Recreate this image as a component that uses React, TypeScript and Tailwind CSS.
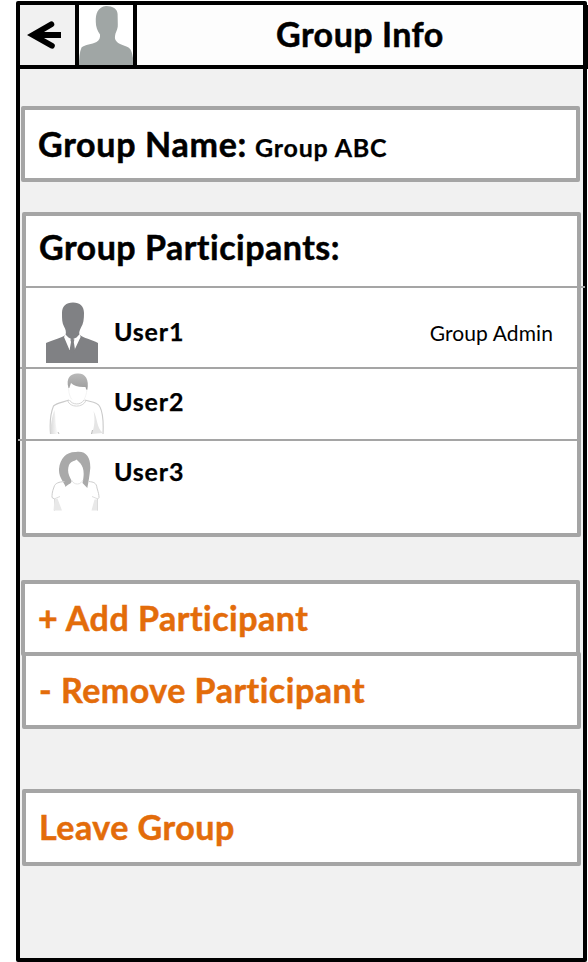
import type { ReactNode } from "react";

const heading = "text-[34px] leading-[40px] font-bold tracking-[0.5px] whitespace-pre [-webkit-text-stroke:0.5px_currentColor]";
const userName = "text-[25px] leading-[30px] font-bold tracking-[0.8px] whitespace-pre [-webkit-text-stroke:0.25px_currentColor]";

function BackArrow() {
  return (
    <svg className="h-[60px] w-[55px]" viewBox="20 5 55 60">
      <path d="M27 35 L50.500 21.600 A2.900 2.900 0 0 1 53.300 26.600 L44 32 H61 V38 H44 L53.300 43.200 A2.900 2.900 0 0 1 50.500 48.300 Z" fill="#000" />
    </svg>
  );
}

function GroupAvatar() {
  return (
    <svg className="h-[60px] w-[54px]" viewBox="79 5 54 60">
      <path d="M106 6 C112 5.800 117.500 8.500 117.600 14 L117.800 24 C118.200 28 116.500 31 115.500 33.500 C115 36 114.500 38 115.500 40 C117.500 44 123 45 128.500 47.500 C131.800 49.500 132.500 55 133 58 V65 H79 C79 59 79.500 52 81.500 47.500 C85 44.500 92 44.500 96.500 42 C99.500 40 100.300 37.500 100 34.500 C97.500 31 95.800 27 95.800 22 C95.500 13 98 7 106 6 Z" fill="#a0a6a5" />
    </svg>
  );
}

function AdminAvatar() {
  return (
    <svg className="h-[61px] w-[53px]" viewBox="46 302 53 61">
      <path d="M73 302.500 C80 302.500 84 306.500 84 313 C84 319 83.500 324 81 327.500 C79.500 331 78.500 333 80 335 C83 338 92 339.500 98 343 V363 H46 V343 C52 340 62 338 65.500 335 C66.500 332 65.500 329 64 326.500 C62 323 62 319 62 313 C62 306.500 66 302.500 73 302.500 Z" fill="#808184" />
      <path d="M65.500 334.500 L68.500 337.500 L72 339.500 L76.500 337.500 L79.800 334 L80.600 337 L74.500 350 L69.500 350 L64 337 Z" fill="#fff" />
      <path d="M70.300 339.500 L72.300 338.800 L74.400 339.500 L73.800 342 L75 349.500 L72.500 353 L69.700 349.500 L71 342 Z" fill="#808184" />
    </svg>
  );
}

function ManAvatar() {
  return (
    <svg className="h-[63px] w-[56px]" viewBox="49 372 56 63">
      <defs>
        <linearGradient id="man-hair" x1="0" y1="0" x2="0" y2="1">
          <stop offset="0" stopColor="#b9b9b9" />
          <stop offset="1" stopColor="#9c9c9c" />
        </linearGradient>
        <linearGradient id="man-sleeve" x1="0" y1="0" x2="1" y2="0">
          <stop offset="0" stopColor="#d9d9d9" />
          <stop offset="1" stopColor="#fff" />
        </linearGradient>
      </defs>
      <path d="M68.500 388 C65.500 378 71 373.300 77.500 373.500 C85 373 89.500 379 87.300 390 L86.300 390 L85.500 387 C79 387.500 74 386 71 383 L69.300 388 Z" fill="url(#man-hair)" />
      <path d="M68.500 388 C68.800 394 70.500 398 72 399.500 M87 389 C86.500 394 85.500 397 84 399.500" fill="none" stroke="#f0f0f0" strokeWidth=".8" />
      <path d="M50.500 434 C49.500 422 51 412 53.500 406 C57 402.500 65 402 69 400 M84.500 400 C91 402 98 402 100 407 C103.500 414 103.500 424 103 434" fill="none" stroke="#cacaca" strokeWidth="1.100" />
      <path d="M67.500 400.500 C70 408 83 408 86 400.500 M69.500 400 C72 405 81 405.500 84 400" fill="none" stroke="#d0d0d0" strokeWidth=".9" />
      <path d="M50.500 434 C50.500 426 52 416 54.500 410 C56 418 54.500 424 58 434 Z" fill="url(#man-sleeve)" />
      <path d="M91.500 434 C95 427 95 418 93.500 411 C98 419 96 427 103 433 Z" fill="#e5e5e5" />
      <path d="M58 432 l1 2 M92.500 430 l-1 4" stroke="#bbb" />
    </svg>
  );
}

function WomanAvatar() {
  return (
    <svg className="h-[61px] w-[50px]" viewBox="50 451 50 61">
      <path d="M65.500 487 C65 483 58.500 478 59 469 C60 458 67 451.500 76 452 C86 450.500 90.500 457 90.300 468 C89.500 476 88.500 482 87.300 488 L82.500 483 C84.500 474 84 468 80.500 463.500 L76.500 459.500 C74 461.500 71 461 69 465 C67 471 68.500 475 71.500 480.500 C72 484 68 484 65.500 487 Z" fill="#a9a9a9" />
      <path d="M71.500 480 C73 483 75 484 77.500 484 C80 484 82 482 83 480" fill="none" stroke="#e4e4e4" />
      <path d="M64.500 481.500 C59 482 55 483 54 487 C52 492 52 495 52 497.500 L54.500 499 V510.500 M89 481.500 C93 482 96.500 482.500 97 488 C98.500 493 99 495 99 497.500 L97.500 499 V510.500" fill="none" stroke="#cdcdcd" />
      <path d="M54 499 L60 496.500 M98 499 L92 496.500" fill="none" stroke="#dedede" />
      <path d="M54.500 499.500 L57.500 498.500 L62 510.500 H53.500 Z M94.500 499.500 H97.500 V510.500 H91.500 Z" fill="#e8e8e8" />
    </svg>
  );
}

function Card({ className, children }: { className: string; children: ReactNode }) {
  return <section className={`w-[559px] shrink-0 rounded-[2px] border-4 border-[#a5a5a5] bg-white ${className}`}>{children}</section>;
}

export default function App() {
  return (
    <div className="h-[962px] w-[588px] overflow-hidden bg-white pt-px pl-4 font-['Lato',sans-serif] text-black [font-variant-ligatures:none]">
      <div className="flex h-[961px] w-[571px] flex-col rounded-[2px] border-4 border-black bg-[#f1f1f1]">
        <header className="-mr-[5px] flex h-16 w-[568px] shrink-0 border-r-[5px] border-b-4 border-black bg-[#fdfdfd]">
          <button className="w-[59px] shrink-0 border-r-4 border-black bg-[#f1f1f1]"><BackArrow /></button>
          <div className="w-[58px] shrink-0 border-r-4 border-black bg-white"><GroupAvatar /></div>
          <h1 className={`${heading} pt-[9px] pl-[139px]`}>Group Info</h1>
        </header>

        <Card className="mt-[37px] ml-px flex h-[76px] items-baseline pt-[14px] pl-[13px]">
          <h2 className={`${heading} w-[217px] tracking-[0.7px]`}>Group Name:</h2>
          <span className={userName}>Group ABC</span>
        </Card>

        <Card className="mt-[30px] ml-[2px] flex h-[325px] flex-col">
          <h2 className={`${heading} h-[70px] shrink-0 pt-[11px] pl-[13px]`}>Group Participants:</h2>
          <div className="-mr-2 h-[2px] w-[559px] shrink-0 bg-[#a5a5a5]" />
          <div className="flex h-[79px] shrink-0 pl-5">
            <div className="pt-[14px]"><AdminAvatar /></div>
            <span className={`${userName} pt-[28px] pl-[15px]`}>User1</span>
            <span className="mr-6 ml-auto pt-[32px] text-[21px] leading-[26px] tracking-[0.1px] whitespace-pre">Group Admin</span>
          </div>
          <div className="-ml-[6px] h-[2px] w-[558px] shrink-0 bg-[#a5a5a5]" />
          <div className="flex h-[70px] shrink-0 pl-[23px]">
            <div className="pt-[3px]"><ManAvatar /></div>
            <span className={`${userName} pt-[17px] pl-[9px]`}>User2</span>
          </div>
          <div className="-ml-2 h-[2px] w-[560px] shrink-0 bg-[#a5a5a5]" />
          <div className="flex h-[92px] shrink-0 pl-6">
            <div className="pt-[10px]"><WomanAvatar /></div>
            <span className={`${userName} pt-[15px] pl-[14px]`}>User3</span>
          </div>
        </Card>

        <Card className="mt-[43px] ml-px h-[76px] pt-[14px] pl-[13px] text-[#e36c0a]">
          <button className={heading}>+ Add Participant</button>
        </Card>
        <Card className="-mt-1 ml-[2px] h-[77px] pt-[14px] pl-[13px] text-[#e36c0a]">
          <button className={heading}>- Remove Participant</button>
        </Card>
        <Card className="mt-[60px] ml-[2px] h-[77px] pt-[14px] pl-[13px] text-[#e36c0a]">
          <button className={heading}>Leave Group</button>
        </Card>
      </div>
    </div>
  );
}
